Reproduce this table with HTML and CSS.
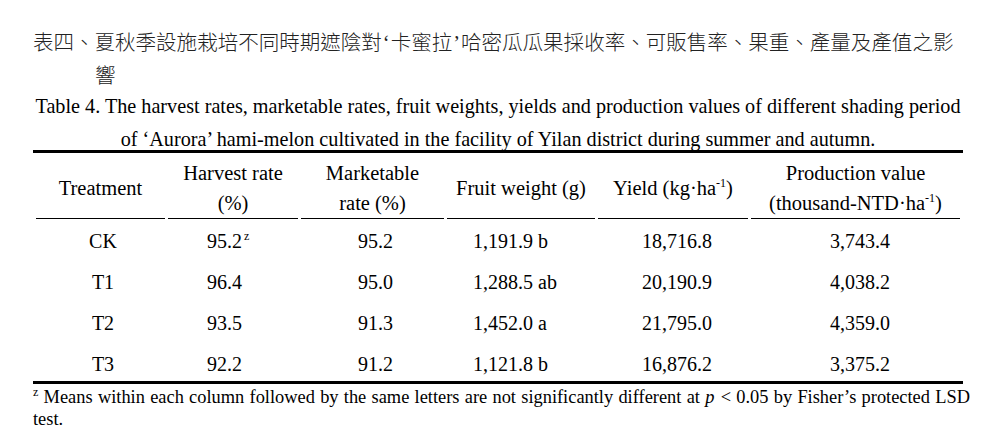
FILE: index.html
```html
<!DOCTYPE html>
<html lang="zh-Hant">
<head>
<meta charset="utf-8">
<title>表四</title>
<link rel="stylesheet" href="styles.css">
</head>
<body>
<div class="page">
  <h1 class="title-zh">表四、夏秋季設施栽培不同時期遮陰對<span class="q">‘</span>卡蜜拉<span class="q">’</span>哈密瓜瓜果採收率、可販售率、果重、產量及產值之影響</h1>
  <p class="title-en" lang="en">Table 4. The harvest rates, marketable rates, fruit weights, yields and production values of different shading period<br>of ‘Aurora’ hami-melon cultivated in the facility of Yilan district during summer and autumn.</p>
  <table class="data" lang="en">
    <colgroup>
      <col class="c1"><col class="c2"><col class="c3"><col class="c4"><col class="c5"><col class="c6">
    </colgroup>
    <thead>
      <tr>
        <th>Treatment</th>
        <th>Harvest rate<br>(%)</th>
        <th>Marketable<br>rate (%)</th>
        <th>Fruit weight (g)</th>
        <th>Yield (kg·ha<sup>-1</sup>)</th>
        <th>Production value<br>(thousand-NTD·ha<sup>-1</sup>)</th>
      </tr>
    </thead>
    <tbody>
      <tr><td>CK</td><td>95.2<sup class="z">z</sup></td><td>95.2</td><td>1,191.9 b</td><td>18,716.8</td><td>3,743.4</td></tr>
      <tr><td>T1</td><td>96.4</td><td>95.0</td><td>1,288.5 ab</td><td>20,190.9</td><td>4,038.2</td></tr>
      <tr><td>T2</td><td>93.5</td><td>91.3</td><td>1,452.0 a</td><td>21,795.0</td><td>4,359.0</td></tr>
      <tr><td>T3</td><td>92.2</td><td>91.2</td><td>1,121.8 b</td><td>16,876.2</td><td>3,375.2</td></tr>
    </tbody>
  </table>
  <p class="note" lang="en"><sup>z</sup> Means within each column followed by the same letters are not significantly different at <i>p</i> &lt; 0.05 by Fisher’s protected LSD test.</p>
</div>
</body>
</html>
```

FILE: styles.css
```css
html, body {
  margin: 0;
  padding: 0;
  background: #ffffff;
  color: #000000;
}

.page {
  padding: 25px 0 0 33px;
  width: 930px;
}

.title-zh {
  margin: 0;
  font-family: "Noto Sans CJK TC", "Noto Sans CJK SC", sans-serif;
  font-weight: 300;
  font-size: 20.53px;
  line-height: 33px;
  padding-left: 62px;
  text-indent: -62px;
  color: #222222;
}

.title-zh .q {
  font-family: "Liberation Serif", serif;
  line-height: 0;
  margin: 0 1px;
}

.title-en {
  margin: -1px 0 -6px;
  font-family: "Liberation Serif", "Times New Roman", serif;
  font-size: 20.2px;
  line-height: 33px;
  text-align: center;
}

.data {
  width: 930px;
  table-layout: fixed;
  border-collapse: separate;
  border-spacing: 3px 0;
  border-top: 3px solid #000;
  border-bottom: 3px solid #000;
  font-family: "Liberation Serif", "Times New Roman", serif;
  font-size: 20px;
}

.data .c1 { width: 129px; }
.data .c2 { width: 130px; }
.data .c3 { width: 143px; }
.data .c4 { width: 148px; }
.data .c5 { width: 150px; }
.data .c6 { width: 209px; }

.data th {
  font-weight: 400;
  font-size: 20.5px;
  line-height: 30px;
  padding: 5px 0 0;
  border-bottom: 1.5px solid #000;
  text-align: center;
  vertical-align: middle;
}

.data td {
  line-height: 24px;
  padding: 10px 0 7px;
  text-align: left;
  white-space: nowrap;
}

.data tbody tr:last-child td {
  padding-bottom: 5px;
}

.data td:nth-child(1) { text-align: center; padding-left: 5px; }
.data td:nth-child(2) { padding-left: 39px; }
.data td:nth-child(3) { padding-left: 57px; }
.data td:nth-child(4) { padding-left: 26px; }
.data td:nth-child(5) { padding-left: 44px; }
.data td:nth-child(6) { padding-left: 79px; }

.data sup {
  font-size: 12px;
  line-height: 0;
  vertical-align: 8px;
}

.data sup.z {
  margin-left: 2px;
}

.note {
  margin: 2px 0 0;
  width: 937px;
  font-family: "Liberation Serif", "Times New Roman", serif;
  font-size: 18.4px;
  line-height: 22px;
  text-align: justify;
}

.note i {
  padding-right: 1px;
}

.note sup {
  font-size: 12px;
  line-height: 0;
  vertical-align: 7px;
}
```
